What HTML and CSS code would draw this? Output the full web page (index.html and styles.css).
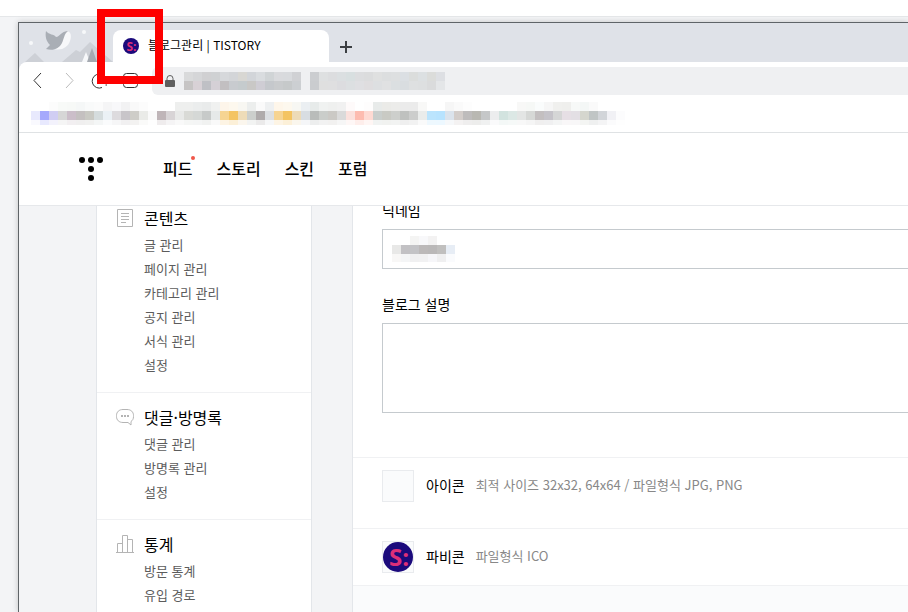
FILE: index.html
```html
<!DOCTYPE html>
<html lang="ko">
<head>
  <meta charset="UTF-8">
  <meta name="viewport" content="width=device-width, initial-scale=1.0">
  <title>블로그관리 | TISTORY</title>
  <link rel="stylesheet" href="styles.css">
</head>
<body>
  <div class="top-strip"></div>

  <div class="window">
    <div class="tab-strip">
      <svg class="theme-art" width="94" height="39" viewBox="0 0 94 39">
        <path d="M6 39L16 30L25 39ZM43 39L57 27L61 29L71 19L94 39Z" fill="#cdd0d6"/>
        <path d="M63 39L67 29L71 39Z" fill="#f7f8fa"/>
        <path d="M68 39L73 25L78 39Z" fill="#a5aab1"/>
        <circle cx="12" cy="20" r="2" fill="#f7f8fa"/>
        <circle cx="65" cy="9" r="2" fill="#f7f8fa"/>
        <path d="M46 8C52 7 53 13 51 18C49 24 43 28 35 26Z" fill="#f7f8fa"/>
        <path d="M27 8C30 12 35 11 37 14C41 14 42 8 49 8C45 11 45 16 43 20C40 26 34 28 27 26L31 22C27 18 26 13 27 8Z" fill="#a9aeb5"/>
      </svg>
      <div class="tab">
        <svg class="tab-icon" width="16" height="16" viewBox="0 0 32 32">
          <circle cx="16" cy="16" r="16" fill="#1b0a7c"/>
          <text class="favicon-text" x="17" y="25" text-anchor="middle">S:</text>
        </svg>
        <span class="tab-title">블로그관리 | TISTORY</span>
      </div>
      <button class="new-tab" aria-label="새 탭">
        <svg width="12" height="12" viewBox="0 0 12 12"><path d="M6 0V12M0 6H12" stroke="#3c3f43" stroke-width="2"/></svg>
      </button>
    </div>

    <div class="toolbar">
      <button class="tool" aria-label="뒤로">
        <svg width="18" height="18" viewBox="0 0 18 18"><path d="M13 1L6 8.500L13 16" stroke="#333"/></svg>
      </button>
      <button class="tool" aria-label="앞으로">
        <svg width="18" height="18" viewBox="0 0 18 18"><path d="M7 1L14 8.500L7 16" stroke="#bbb"/></svg>
      </button>
      <button class="tool" aria-label="새로고침">
        <svg width="18" height="18" viewBox="0 0 18 18"><path d="M12 15.500A7 7 0 1 1 15.500 6M15.500 13H17" stroke="#333"/></svg>
      </button>
      <button class="tool" aria-label="홈">
        <svg width="18" height="18" viewBox="0 0 18 18"><rect x="2.500" y="1.500" width="14" height="14" rx="3" stroke="#333"/></svg>
      </button>
      <div class="address">
        <svg class="lock" width="10" height="12" viewBox="0 0 10 12">
          <rect y="5" width="10" height="7" rx="1" fill="#606060"/>
          <path d="M2 6V3.500A3 3 0 0 1 8 3.500V6" fill="none" stroke="#606060"/>
        </svg>
        <svg class="mosaic" id="address-mosaic" width="261" height="18"></svg>
      </div>
    </div>

    <div class="bookmarks">
      <svg class="mosaic" id="bookmark-mosaic" width="594" height="23"></svg>
    </div>

    <header class="header">
      <a class="logo" href="#" aria-label="TISTORY">
        <svg width="24" height="24" viewBox="0 0 24 24">
          <circle cx="3" cy="3" r="3"/>
          <circle cx="12" cy="3" r="3"/>
          <circle cx="21" cy="3" r="3"/>
          <circle cx="12" cy="12" r="3"/>
          <circle cx="12" cy="21" r="3"/>
        </svg>
      </a>
      <nav class="nav">
        <a class="new" href="#">피드</a>
        <a href="#">스토리</a>
        <a href="#">스킨</a>
        <a href="#">포럼</a>
      </nav>
    </header>

    <div class="content">
      <aside class="sidebar">
        <section class="menu">
          <svg class="menu-icon" width="18" height="18" viewBox="0 0 18 18">
            <path d="M1.500 .5H16.500V17.500H1.500ZM5 4.500H13M5 7.500H13M5 10.500H13M5 13.500H10"/>
          </svg>
          <h2>콘텐츠</h2>
          <ul>
            <li><a href="#">글 관리</a></li>
            <li><a href="#">페이지 관리</a></li>
            <li><a href="#">카테고리 관리</a></li>
            <li><a href="#">공지 관리</a></li>
            <li><a href="#">서식 관리</a></li>
            <li><a href="#">설정</a></li>
          </ul>
        </section>
        <section class="menu">
          <svg class="menu-icon" width="18" height="18" viewBox="0 0 18 18">
            <path d="M12 14.500H7C3 14.500 .5 12 .5 8.500V7.500C.5 4 3 1.500 7 1.500H11C15 1.500 17.500 4 17.500 7.500V8.500C17.500 11 16.500 12.500 15 13.500V17Z"/>
            <path d="M5 8H7M8 8H10M11 8H13" stroke-width="2"/>
          </svg>
          <h2>댓글·방명록</h2>
          <ul>
            <li><a href="#">댓글 관리</a></li>
            <li><a href="#">방명록 관리</a></li>
            <li><a href="#">설정</a></li>
          </ul>
        </section>
        <section class="menu">
          <svg class="menu-icon" width="18" height="18" viewBox="0 0 18 18">
            <path d="M0 17.500H18M1.500 17V8.500H6.500M6.500 17V.5H11.500V17M11.500 4.500H16.500V17"/>
          </svg>
          <h2>통계</h2>
          <ul>
            <li><a href="#">방문 통계</a></li>
            <li><a href="#">유입 경로</a></li>
          </ul>
        </section>
      </aside>

      <main class="main">
        <form class="blog-form">
          <label for="nickname">닉네임</label>
          <div class="field">
            <input type="text" id="nickname">
            <svg class="mosaic" id="nickname-mosaic" width="63" height="26"></svg>
          </div>
          <label for="description">블로그 설명</label>
          <textarea id="description"></textarea>
        </form>
        <div class="row row-icon">
          <div class="thumb"></div>
          <strong>아이콘</strong>
          <span>최적 사이즈 32x32, 64x64 / 파일형식 JPG, PNG</span>
        </div>
        <div class="row">
          <div class="thumb">
            <svg width="32" height="32" viewBox="0 0 32 32">
              <circle cx="16" cy="16" r="15" fill="#1b0a7c"/>
              <text class="favicon-text" x="17" y="25" text-anchor="middle">S:</text>
            </svg>
          </div>
          <strong>파비콘</strong>
          <span>파일형식 ICO</span>
        </div>
      </main>
    </div>
  </div>

  <div class="marker"></div>

  <script src="mosaic.js"></script>
</body>
</html>
```
FILE: styles.css
```css
* {
  box-sizing: border-box;
}

body {
  font-family: "Noto Sans CJK KR", "Noto Sans", sans-serif;
  margin: 0;
  height: 100vh;
  display: flex;
  flex-direction: column;
  overflow: hidden;
  background: #f3f4f6;
  color: #000;
}

a {
  color: inherit;
  text-decoration: none;
}

button {
  background: none;
  border: none;
  padding: 0;
}

svg {
  display: block;
}

.top-strip {
  flex: none;
  height: 17px;
  background: #fff;
  border-bottom: 1px solid #e5e7e9;
}

.window {
  flex: 1;
  min-height: 0;
  display: flex;
  flex-direction: column;
  margin: 5px 0 0 18px;
  border-top: 1px solid #5f6468;
  border-left: 1px solid #5f6468;
  background: #dfe2e8;
  box-shadow: 0 0 6px rgba(0, 0, 0, 0.2);
}

/* browser chrome */
.tab-strip {
  flex: none;
  display: flex;
  align-items: flex-end;
  height: 39px;
}

.tab {
  display: flex;
  align-items: center;
  gap: 9px;
  width: 216px;
  height: 32px;
  padding-left: 10px;
  background: #fff;
  border-radius: 8px 8px 0 0;
}

.tab-title {
  padding-bottom: 2px;
  font-size: 12px;
  line-height: 16px;
}

.favicon-text {
  font-family: "Open Sans", sans-serif;
  font-size: 24px;
  font-weight: bold;
  fill: #dd2f78;
}

.new-tab {
  align-self: center;
  margin: 8px 0 0 11px;
}

.toolbar {
  flex: none;
  display: flex;
  align-items: center;
  gap: 13px;
  height: 38px;
  padding-left: 9px;
  background: #fff;
  border-radius: 8px 0 0 0;
}

.tool svg {
  fill: none;
}

.address {
  flex: 1;
  display: flex;
  align-items: center;
  gap: 9px;
  height: 28px;
  padding-left: 13px;
  background: #eff0f2;
  border-radius: 6px 0 0 6px;
}

.bookmarks {
  flex: none;
  height: 33px;
  padding: 2px 0 0 12px;
  background: #fff;
  border-bottom: 1px solid #dfe2e4;
}

/* tistory header */
.header {
  flex: none;
  display: flex;
  align-items: center;
  gap: 60px;
  height: 73px;
  padding-left: 60px;
  background: #fff;
  border-bottom: 1px solid #e6e8eb;
}

.nav {
  display: flex;
  gap: 24px;
  padding-bottom: 2px;
  font-size: 16px;
  font-weight: 500;
  line-height: 24px;
}

.new {
  position: relative;
}

.new::after {
  content: "";
  position: absolute;
  top: 0;
  right: -3px;
  width: 4px;
  height: 4px;
  border-radius: 50%;
  background: #f0574a;
}

.content {
  flex: 1;
  min-height: 0;
  display: flex;
  gap: 40px;
  padding-left: 77px;
  overflow: hidden;
  background: #f3f4f6;
}

.sidebar {
  flex: none;
  width: 216px;
  background: #fff;
  border: solid #e3e6ea;
  border-width: 0 1px;
}

.menu {
  display: grid;
  grid-template-columns: 18px 1fr;
  column-gap: 10px;
  row-gap: 3px;
  padding: 12px 19px 15px;
  border-bottom: 1px solid #f0f1f3;
}

.menu:first-child {
  padding-top: 0;
}

.menu-icon {
  align-self: center;
  fill: none;
  stroke: #b4b4b4;
}

.menu h2 {
  margin: 0;
  font-size: 16px;
  font-weight: normal;
  line-height: 24px;
}

.menu ul {
  grid-column: 2;
  margin: 0;
  padding: 0;
  list-style: none;
  font-size: 13px;
  line-height: 24px;
  color: #5c5c5c;
}

.main {
  flex: 1;
  min-width: 0;
  background: #fafbfc;
  border-left: 1px solid #e3e6ea;
}

.blog-form {
  margin-top: -8px;
  padding: 0 0 44px 29px;
  background: #fff;
  border-bottom: 1px solid #f0f1f3;
}

.blog-form label {
  display: block;
  margin-bottom: 7px;
  font-size: 14px;
  line-height: 24px;
}

.field {
  position: relative;
  margin-bottom: 23px;
}

.field .mosaic {
  position: absolute;
  top: 7px;
  left: 10px;
}

.blog-form input,
.blog-form textarea {
  display: block;
  width: 100%;
  height: 40px;
  padding: 10px;
  background: #fff;
  border: 1px solid #c5cace;
  border-right: none;
  border-radius: 0;
  font: inherit;
  font-size: 14px;
  resize: none;
}

.blog-form textarea {
  height: 90px;
}

.row {
  display: flex;
  align-items: center;
  padding: 12px 0 12px 29px;
  background: #fff;
  border-bottom: 1px solid #f0f1f3;
  white-space: nowrap;
}

.row-icon {
  padding-bottom: 26px;
}

.thumb {
  width: 32px;
  height: 32px;
  margin-right: 12px;
  background: #fafbfc;
  box-shadow: inset 0 0 0 1px #e9ebee;
}

.row strong,
.row span {
  padding-bottom: 2px;
  font-size: 14px;
  font-weight: normal;
  line-height: 20px;
}

.row strong {
  margin-right: 11px;
}

.row span {
  font-size: 13px;
  color: #888;
}

/* red frame over the favicon */
.marker {
  position: absolute;
  top: 9px;
  left: 97px;
  width: 66px;
  height: 75px;
  border: 8px solid #fe0000;
}
```
FILE: mosaic.js
```js
// pixelated private areas: one row per string, "-" leaves a cell empty
var CELL = 9;

function drawMosaic(id, rows) {
  var svg = document.getElementById(id);
  rows.forEach(function (row, r) {
    row.colors.split(' ').forEach(function (color, i) {
      if (color === '-') return;
      var rect = document.createElementNS('http://www.w3.org/2000/svg', 'rect');
      rect.setAttribute('x', i * CELL);
      rect.setAttribute('y', r * CELL);
      rect.setAttribute('width', CELL);
      rect.setAttribute('height', row.height || CELL);
      rect.setAttribute('fill', '#' + color);
      rect.setAttribute('opacity', row.opacity || 1);
      svg.appendChild(rect);
    });
  });
}

drawMosaic('address-mosaic', [
  { colors: 'd9dadb d5d6d8 d0d0d2 cfd1d3 d6d8db d3d5d8 d8d7d3 d2d5d9 d9dcdf d0d4d6 d9dadd d8dadd d0d1d4 - cbcdd0 dee0e1 dcdddf dbdfe1 d8dfe0 dcdddf dbdcdd dfe0e0 dcdedf dddfe0 dbdfe3 dbdddc dce0e2 dbdcda dddfe3' },
  { colors: 'c6c4c4 d8d1d6 bfc0c5 d5d0d6 c2bfc1 c8cbcf c5cbcd c9c8c6 cfcdd4 c5c8cc c9cbcd c6c9ca cccfd2 - cacccf dfdfdf dfdfe0 dcdcdf dcdfe1 dfdfe2 dfdddf dddfe1 e0e1e2 dbdfe1 d9dde0 dee0e1 dddfe0 dadbdc e4e6e8' }
]);

var bookmarks = 'e8e9fd a5a9fc d0cdf3 d6d6d6 cbbec9 c4c0c0 c9c9c3 d5dcdd ebf1f5 dddbde c8c5c9 cecdc8 eaebe8 fafafa bfb5b8 d8d4d6 e8e9e8 d9dad6 d5d8d6 c7cac9 e6e9e9 f6d492 f4c462 eedcb8 cccfcc afabab dcdfe2 f6d492 f4c462 eddbb8 d8dde2 b9bcba cacdca cbc9c5 dadada fbe1dd fdbcb0 fedad3 c9cecc c9cac4 cdcfcc bfc1bf cccdcc eaeceb bbe4fd b8e3fe dbe3ec d3cdca bebcbc b9b8b2 c5c7c8 ecedee d2e3df dce8e5 e3e5e4 d6d8d6 c3bfc0 c5c3c9 d5d6d6 e6dfe5 e3dfe4 d5d6ce c0c5c5 d2d5d9 f1f1f5 fcfcfd';

drawMosaic('bookmark-mosaic', [
  { colors: '- - fcfcfc f8faf8 f7f9f7 f5f7f7 f9fafa fbfbfb f5f5f6 f8f8fa f2f2f3 f9f9f9 fcfcfc - - - eeefee eeefee ebeded e9ebeb f0f1f0 fdf5ea fdf8ee f8f7f2 eceeed fafafa eef0f1 fef6ea fdf8ee f7f7f3 ebeff2 e7ebea f0f2f1 eff0ef f1f1f1 fefafa - fefdfd e8ebea ebebe8 ececea ebebeb ebebeb f8f8f7 - - f6f6f6 fafafa fdfdfd - - - - - f8f8f7 f6f8f6 fafcfc f6f6f6 f0f0ee efefed f7f9f8 f4f7f6 fafafa' },
  { colors: bookmarks },
  { colors: bookmarks, height: 5, opacity: 0.25 }
]);

drawMosaic('nickname-mosaic', [
  { colors: '- - f4f4f3 f8f8fa f3f2f2 - -' },
  { colors: 'e8e8e7 c2c1c4 c3c3c6 bcb9b9 bab8b8 c0bfbe e7edf5' },
  { colors: 'f8f7f6 f4f5f6 f0f0f1 f1f1f2 f6f6f9 efeff0 fafbfd', height: 8 }
]);
```
